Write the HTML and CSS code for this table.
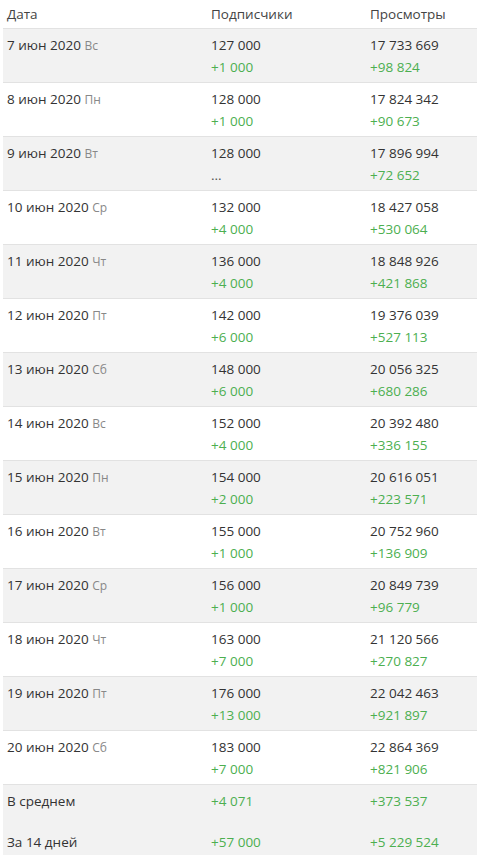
FILE: index.html
```html
<!DOCTYPE html>
<html lang="ru">
<head>
  <meta charset="UTF-8">
  <title>Статистика</title>
  <link rel="stylesheet" href="styles.css">
</head>
<body>
<table class="stats">
  <thead>
    <tr><th class="c1">Дата</th><th class="c2">Подписчики</th><th class="c3">Просмотры</th></tr>
  </thead>
  <tbody>
    <tr><td>7 июн 2020 <span class="wd">Вс</span></td><td>127 000<div class="up">+1 000</div></td><td>17 733 669<div class="up">+98 824</div></td></tr>
    <tr><td>8 июн 2020 <span class="wd">Пн</span></td><td>128 000<div class="up">+1 000</div></td><td>17 824 342<div class="up">+90 673</div></td></tr>
    <tr><td>9 июн 2020 <span class="wd">Вт</span></td><td>128 000<div class="none">...</div></td><td>17 896 994<div class="up">+72 652</div></td></tr>
    <tr><td>10 июн 2020 <span class="wd">Ср</span></td><td>132 000<div class="up">+4 000</div></td><td>18 427 058<div class="up">+530 064</div></td></tr>
    <tr><td>11 июн 2020 <span class="wd">Чт</span></td><td>136 000<div class="up">+4 000</div></td><td>18 848 926<div class="up">+421 868</div></td></tr>
    <tr><td>12 июн 2020 <span class="wd">Пт</span></td><td>142 000<div class="up">+6 000</div></td><td>19 376 039<div class="up">+527 113</div></td></tr>
    <tr><td>13 июн 2020 <span class="wd">Сб</span></td><td>148 000<div class="up">+6 000</div></td><td>20 056 325<div class="up">+680 286</div></td></tr>
    <tr><td>14 июн 2020 <span class="wd">Вс</span></td><td>152 000<div class="up">+4 000</div></td><td>20 392 480<div class="up">+336 155</div></td></tr>
    <tr><td>15 июн 2020 <span class="wd">Пн</span></td><td>154 000<div class="up">+2 000</div></td><td>20 616 051<div class="up">+223 571</div></td></tr>
    <tr><td>16 июн 2020 <span class="wd">Вт</span></td><td>155 000<div class="up">+1 000</div></td><td>20 752 960<div class="up">+136 909</div></td></tr>
    <tr><td>17 июн 2020 <span class="wd">Ср</span></td><td>156 000<div class="up">+1 000</div></td><td>20 849 739<div class="up">+96 779</div></td></tr>
    <tr><td>18 июн 2020 <span class="wd">Чт</span></td><td>163 000<div class="up">+7 000</div></td><td>21 120 566<div class="up">+270 827</div></td></tr>
    <tr><td>19 июн 2020 <span class="wd">Пт</span></td><td>176 000<div class="up">+13 000</div></td><td>22 042 463<div class="up">+921 897</div></td></tr>
    <tr><td>20 июн 2020 <span class="wd">Сб</span></td><td>183 000<div class="up">+7 000</div></td><td>22 864 369<div class="up">+821 906</div></td></tr>
  </tbody>
  <tfoot>
    <tr><td>В среднем</td><td class="up">+4 071</td><td class="up">+373 537</td></tr>
    <tr><td>За 14 дней</td><td class="up">+57 000</td><td class="up">+5 229 524</td></tr>
  </tfoot>
</table>
</body>
</html>
```

FILE: styles.css
```css
* {
  margin: 0;
  padding: 0;
}
body {
  background: #fff;
  font-family: "Open Sans", "Noto Sans", sans-serif;
  font-size: 13.5px;
  color: #333;
}
.stats {
  width: 474px;
  margin-left: 3px;
  border-collapse: collapse;
}
.stats th {
  font-weight: normal;
  text-align: left;
  color: #444;
  height: 28px;
  padding: 0 4px;
  vertical-align: middle;
}
.stats .c1 {
  width: 196px;
}
.stats .c2 {
  width: 151px;
}
.stats td {
  text-align: left;
  vertical-align: top;
  padding: 5px 4px 0;
  line-height: 22px;
  height: 48px;
  border-top: 1px solid #e2e2e2;
}
.stats tbody tr:nth-child(odd) td {
  background: #f2f2f2;
}
.stats tfoot td {
  background: #f2f2f2;
  height: 36px;
  border-top: none;
}
.stats tfoot tr:first-child td {
  border-top: 1px solid #e2e2e2;
}
.wd {
  font-size: 12px;
  color: #888;
}
.up {
  color: #4caf50;
}
.none {
  color: #555;
}
```
